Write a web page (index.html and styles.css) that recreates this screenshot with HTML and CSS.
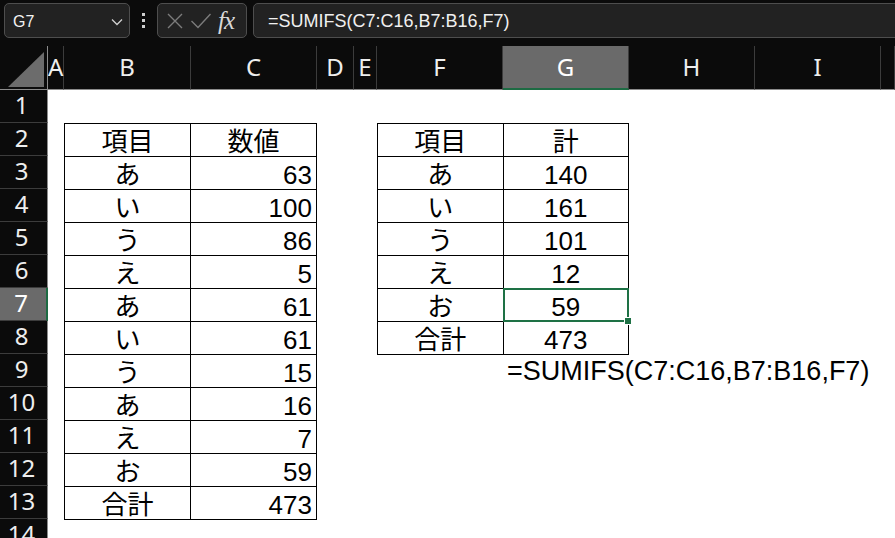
FILE: index.html
```html
<!DOCTYPE html>
<html lang="ja">
  <head>
    <meta charset="UTF-8" />
    <meta name="viewport" content="width=device-width, initial-scale=1.0" />
    <title>SUMIFS</title>
    <link rel="stylesheet" href="styles.css">
  </head>
  <body>
    <!-- 数式バー -->
    <div class="toolbar">
      <div class="namebox">
        <span class="name">G7</span>
        <svg class="chevron" width="12" height="8" viewBox="0 0 12 8">
          <path d="M1 1.5 L6 6.5 L11 1.5" fill="none" stroke="#d0d0d0" stroke-width="1.3" />
        </svg>
      </div>
      <div class="grip"><i></i><i></i><i></i></div>
      <div class="fxbox">
        <svg width="18" height="18" viewBox="0 0 18 18">
          <path d="M2 2 L16 16 M16 2 L2 16" stroke="#7c7c7c" stroke-width="1.4" fill="none" />
        </svg>
        <svg width="22" height="18" viewBox="0 0 22 18">
          <path d="M1.5 9 L8 15.5 L20.5 2" stroke="#7c7c7c" stroke-width="1.4" fill="none" />
        </svg>
        <span class="fx">fx</span>
      </div>
      <div class="formula">=SUMIFS(C7:C16,B7:B16,F7)</div>
    </div>

    <!-- シート -->
    <div class="sheet">
      <div class="corner"><span class="tri"></span></div>
      <div class="ch">A</div>
      <div class="ch">B</div>
      <div class="ch">C</div>
      <div class="ch">D</div>
      <div class="ch">E</div>
      <div class="ch">F</div>
      <div class="ch sel">G</div>
      <div class="ch">H</div>
      <div class="ch">I</div>
      <div class="ch"></div>

      <div class="rownums">
        <div class="rn">1</div>
        <div class="rn">2</div>
        <div class="rn">3</div>
        <div class="rn">4</div>
        <div class="rn">5</div>
        <div class="rn">6</div>
        <div class="rn sel">7</div>
        <div class="rn">8</div>
        <div class="rn">9</div>
        <div class="rn">10</div>
        <div class="rn">11</div>
        <div class="rn">12</div>
        <div class="rn">13</div>
        <div class="rn">14</div>
      </div>

      <!-- B2:C13 -->
      <table class="tbl tbl-left">
        <tr><td class="c">項目</td><td class="c">数値</td></tr>
        <tr><td class="c">あ</td><td class="r">63</td></tr>
        <tr><td class="c">い</td><td class="r">100</td></tr>
        <tr><td class="c">う</td><td class="r">86</td></tr>
        <tr><td class="c">え</td><td class="r">5</td></tr>
        <tr><td class="c">あ</td><td class="r">61</td></tr>
        <tr><td class="c">い</td><td class="r">61</td></tr>
        <tr><td class="c">う</td><td class="r">15</td></tr>
        <tr><td class="c">あ</td><td class="r">16</td></tr>
        <tr><td class="c">え</td><td class="r">7</td></tr>
        <tr><td class="c">お</td><td class="r">59</td></tr>
        <tr><td class="c">合計</td><td class="r">473</td></tr>
      </table>

      <!-- F2:G8 -->
      <table class="tbl tbl-right">
        <tr><td class="c">項目</td><td class="c">計</td></tr>
        <tr><td class="c">あ</td><td class="c">140</td></tr>
        <tr><td class="c">い</td><td class="c">161</td></tr>
        <tr><td class="c">う</td><td class="c">101</td></tr>
        <tr><td class="c">え</td><td class="c">12</td></tr>
        <tr><td class="c">お</td><td class="c active">59</td></tr>
        <tr><td class="c">合計</td><td class="c">473</td></tr>
      </table>

      <div class="note">=SUMIFS(C7:C16,B7:B16,F7)</div>
    </div>
  </body>
</html>
```

FILE: styles.css
```css
body {
  margin: 0;
  padding: 0;
  background-color: #0b0b0b;
  overflow: hidden;
}

/* 数式バー */
.toolbar {
  display: flex;
  align-items: center;
  height: 46px;
  padding-left: 4px;
  box-sizing: border-box;
  padding-bottom: 5px;
  font-family: "Liberation Sans", "Noto Sans", sans-serif;
}

.namebox {
  width: 126px;
  height: 35px;
  box-sizing: border-box;
  border: 1px solid #4e4e4e;
  border-radius: 5px;
  background-color: #222222;
  display: flex;
  align-items: center;
  justify-content: space-between;
  padding: 0 6px 0 8px;
}

.name {
  color: #f2f2f2;
  font-size: 16px;
  padding-top: 3px;
}

.chevron {
  margin-top: 3px;
}

.grip {
  width: 27px;
  display: flex;
  flex-direction: column;
  align-items: center;
  gap: 3px;
}

.grip i {
  width: 3px;
  height: 3px;
  background-color: #cfcfcf;
}

.fxbox {
  width: 90px;
  height: 35px;
  box-sizing: border-box;
  border: 1px solid #4e4e4e;
  border-radius: 5px;
  background-color: #222222;
  display: flex;
  align-items: center;
  gap: 6px;
  padding-left: 8px;
}

.fx {
  font-family: "Liberation Serif", "DejaVu Serif", serif;
  font-style: italic;
  font-size: 25px;
  color: #d8d8d8;
  margin-left: 0;
  letter-spacing: -1px;
}

.formula {
  flex: 1;
  margin-left: 6px;
  margin-right: -20px;
  height: 35px;
  box-sizing: border-box;
  border: 1px solid #4e4e4e;
  border-radius: 5px;
  background-color: #222222;
  color: #f0f0f0;
  font-size: 18px;
  line-height: 35px;
  padding-left: 14px;
}

/* シート */
.sheet {
  display: grid;
  grid-template-columns: 48px 16px 127px 126px 37px 23px 126px 126px 126px 126px 1fr;
  grid-template-rows: 44px repeat(14, 33px);
  background-color: #ffffff;
  font-family: "Liberation Sans", "Noto Sans CJK JP", sans-serif;
}

.corner,
.ch {
  background-color: #0b0b0b;
  border-right: 1px solid #3c3c3c;
  border-bottom: 1px solid #8c8c8c;
  box-sizing: border-box;
}

.corner {
  position: relative;
  border-right-color: #8c8c8c;
}

.tri {
  position: absolute;
  left: 8px;
  bottom: 2px;
  width: 36px;
  height: 35px;
  background-color: #6c6c6c;
  clip-path: polygon(100% 0, 100% 100%, 0 100%);
}

.ch {
  color: #eeeeee;
  font-family: "Noto Sans", sans-serif;
  font-size: 24px;
  text-align: center;
  line-height: 42px;
}

.ch.sel {
  background-color: #6a6a6a;
  color: #ffffff;
  border-bottom: 2px solid #1d6b43;
}

.rownums {
  grid-column: 1;
  grid-row: 2 / span 14;
  display: flex;
  flex-direction: column;
  background-color: #0b0b0b;
}

.rn {
  height: 33px;
  flex-shrink: 0;
  box-sizing: border-box;
  border-bottom: 1px solid #3c3c3c;
  border-right: 1px solid #8c8c8c;
  color: #eeeeee;
  font-family: "Noto Sans", sans-serif;
  font-size: 24px;
  line-height: 30px;
  text-align: center;
  padding-right: 4px;
}

.rn.sel {
  background-color: #6a6a6a;
  color: #ffffff;
  border-right: 2px solid #1d6b43;
}

/* 表 */
.tbl {
  border-collapse: collapse;
  table-layout: fixed;
  width: 100%;
  height: 100%;
  font-size: 26px;
  color: #000000;
}

.tbl-left {
  grid-column: 3 / 5;
  grid-row: 3 / 15;
}

.tbl-right {
  grid-column: 7 / 9;
  grid-row: 3 / 10;
}

.tbl td {
  border: 1px solid #000000;
  height: 32px;
  padding: 0 4px;
  vertical-align: bottom;
  line-height: 28px;
  overflow: hidden;
}

.tbl td.c {
  text-align: center;
}

.tbl td.r {
  text-align: right;
}

/* 選択セル */
.tbl td.active {
  position: relative;
  overflow: visible;
}

.tbl td.active::after {
  content: "";
  position: absolute;
  left: -1px;
  top: -1px;
  right: -1px;
  bottom: -1px;
  border: 2px solid #1e7145;
}

.tbl td.active::before {
  content: "";
  position: absolute;
  right: -4px;
  bottom: -4px;
  width: 6px;
  height: 6px;
  background-color: #1e7145;
  border: 1px solid #ffffff;
  z-index: 1;
}

.note {
  grid-column: 8 / -1;
  grid-row: 10;
  font-size: 27px;
  line-height: 29px;
  align-self: end;
  padding-left: 4px;
  padding-bottom: 1px;
  color: #000000;
  white-space: nowrap;
}
```
